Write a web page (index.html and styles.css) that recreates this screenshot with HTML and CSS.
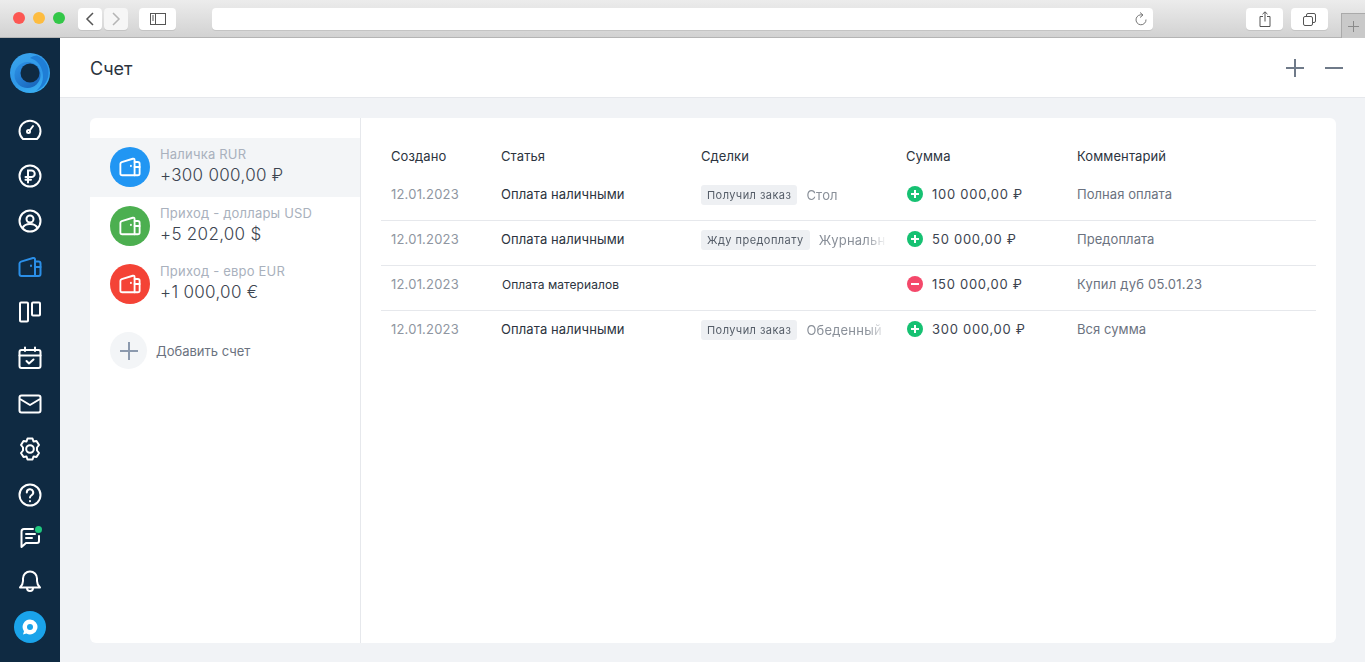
FILE: index.html
```html
<!DOCTYPE html>
<html lang="ru">
<head>
    <meta charset="UTF-8">
    <meta name="viewport" content="width=device-width, initial-scale=1.0">
    <title>Счет</title>
    <link rel="stylesheet" href="styles.css">
</head>
<body>

    <svg class="defs" width="0" height="0">
        <symbol id="wallet" viewBox="0 0 24 24" fill="none" stroke="currentColor" stroke-width="2" stroke-linejoin="round" stroke-linecap="round">
            <path d="M1.500 8.500C1.500 7.500 2 7 3 6.600L15 3C16 2.700 17 3.200 17 4.500V21H3.500A2 2 0 0 1 1.500 19Z"/>
            <path d="M17 6.500h3.500A2 2 0 0 1 22.500 8.500V19a2 2 0 0 1-2 2H17"/>
            <path d="M17 12h5.500"/>
            <path d="M13 10.500v.5"/>
        </symbol>
    </svg>

    <!-- Browser toolbar -->
    <div class="browser">
        <div class="lights">
            <span class="light light-red"></span>
            <span class="light light-yellow"></span>
            <span class="light light-green"></span>
        </div>
        <div class="nav-btns">
            <span class="btn btn-nav">
                <svg width="10" height="16" viewBox="0 0 10 16" fill="none" stroke="#555" stroke-width="1.500"><path d="M8 2 2 8l6 6"/></svg>
            </span>
            <span class="btn btn-nav">
                <svg width="10" height="16" viewBox="0 0 10 16" fill="none" stroke="#b5b5b5" stroke-width="1.500"><path d="M2 2l6 6-6 6"/></svg>
            </span>
        </div>
        <span class="btn btn-side">
            <svg width="16" height="12" viewBox="0 0 16 12" fill="none" stroke="#555"><rect x=".5" y=".5" width="15" height="11"/><path d="M5.500 0v12M2 3h2M2 5h2M2 7h2"/></svg>
        </span>
        <div class="address">
            <svg width="14" height="15" viewBox="0 0 14 15" fill="none" stroke="#777"><path d="M8.500 3A5 5 0 1 0 12 7.500"/><path d="M6 .5 9 3 6 5.500" /></svg>
        </div>
        <span class="btn btn-tool">
            <svg width="12" height="16" viewBox="0 0 12 16" fill="none" stroke="#555"><path d="M4 5.500H1v10h10v-10H8M6 10.500V1M3.500 3.200 6 .8l2.500 2.400"/></svg>
        </span>
        <span class="btn btn-tool">
            <svg width="13" height="13" viewBox="0 0 13 13" fill="none" stroke="#555"><rect x=".5" y="3.500" width="9" height="9" rx="1.500"/><path d="M3.500 3V2A1.500 1.500 0 0 1 5 .5h6A1.500 1.500 0 0 1 12.500 2v6A1.500 1.500 0 0 1 11 9.500h-1"/></svg>
        </span>
        <span class="new-tab">
            <svg width="11" height="11" viewBox="0 0 11 11" stroke="#8a8a8a"><path d="M5.500 0v11M0 5.500h11"/></svg>
        </span>
    </div>

    <div class="app">
        <!-- Sidebar -->
        <nav class="sidebar">
            <svg class="logo" width="40" height="40" viewBox="0 0 40 40">
                <defs>
                    <linearGradient id="logoGrad" x1="0.100" y1="0" x2="0.600" y2="1">
                        <stop offset="0" stop-color="#3aa4ec"/>
                        <stop offset="0.600" stop-color="#2f98e8"/>
                        <stop offset="1" stop-color="#38aef2"/>
                    </linearGradient>
                    <linearGradient id="logoInner" x1="0.100" y1="0.100" x2="0.800" y2="0.900">
                        <stop offset="0" stop-color="#2b8fe4"/>
                        <stop offset="1" stop-color="#1a68bd"/>
                    </linearGradient>
                </defs>
                <circle cx="20" cy="20" r="20" fill="url(#logoGrad)"/>
                <path d="M27 2.500C35 6 39 13 38.500 21 38 29 33 35 26 38 32 33 34 26 32.500 19 31 12 27 7 20 5 22 3.500 24.500 2.500 27 2.500Z" fill="#1f7ed6"/>
                <circle cx="17.500" cy="22" r="13" fill="url(#logoInner)"/>
                <circle cx="20" cy="20" r="9.500" fill="#0f2a42"/>
            </svg>
            <a class="nav-icon">
                <svg width="24" height="24" viewBox="0 0 24 24" fill="none" stroke="currentColor" stroke-width="2" stroke-linecap="round" stroke-linejoin="round"><path d="M5 21.500A10.500 10.500 0 1 1 19 21.500Z" transform="translate(0 -.5)"/><circle cx="10.500" cy="13.500" r="1.500"/><path d="M12 12l3-4"/></svg>
            </a>
            <a class="nav-icon">
                <svg width="24" height="24" viewBox="0 0 24 24" fill="none" stroke="currentColor" stroke-width="2" stroke-linecap="round"><circle cx="12" cy="12" r="10.500"/><path d="M10 18.500V6.500h3.500a3.200 3.200 0 0 1 0 6.500H7.500M7.500 15.800H13"/></svg>
            </a>
            <a class="nav-icon">
                <svg width="24" height="24" viewBox="0 0 24 24" fill="none" stroke="currentColor" stroke-width="2"><circle cx="12" cy="12" r="10.500"/><circle cx="12" cy="10" r="3.500"/><path d="M4.500 19c1.500-3 4-4 7.500-4s6 1 7.500 4"/></svg>
            </a>
            <a class="nav-icon nav-active">
                <svg width="24" height="24"><use href="#wallet"/></svg>
            </a>
            <a class="nav-icon">
                <svg width="24" height="24" viewBox="0 0 24 24" fill="none" stroke="currentColor" stroke-width="2" stroke-linejoin="round"><rect x="2" y="2.500" width="8" height="19" rx="1"/><rect x="14" y="2.500" width="8" height="13" rx="1"/></svg>
            </a>
            <a class="nav-icon">
                <svg width="24" height="24" viewBox="0 0 24 24" fill="none" stroke="currentColor" stroke-width="2" stroke-linecap="round" stroke-linejoin="round"><rect x="1.500" y="4" width="21" height="18" rx="2"/><path d="M1.500 9.500h21M7 1.500V5M17 1.500V5M8.500 15l2.500 2.500 4.500-4"/></svg>
            </a>
            <a class="nav-icon">
                <svg width="24" height="24" viewBox="0 0 24 24" fill="none" stroke="currentColor" stroke-width="2" stroke-linejoin="round"><rect x="1.500" y="3.500" width="21" height="17" rx="2"/><path d="M2 7l10 6 10-6"/></svg>
            </a>
            <a class="nav-icon">
                <svg width="24" height="24" viewBox="0 0 24 24" fill="none" stroke="currentColor" stroke-width="2" stroke-linejoin="round"><path d="M9.500 1.500h5l1 3 3-.5 2.500 4-2 2.500v3l2 2.500-2.500 4-3-.5-1 3h-5l-1-3-3 .5-2.500-4 2-2.500v-3l-2-2.500 2.500-4 3 .5Z"/><circle cx="12" cy="12" r="3.800"/></svg>
            </a>
            <a class="nav-icon nav-help">
                <svg width="24" height="24" viewBox="0 0 24 24" fill="none" stroke="currentColor" stroke-width="2" stroke-linecap="round"><circle cx="12" cy="12" r="10.500"/><path d="M8.800 9.500A3.200 3.200 0 1 1 13.500 12.300C12.500 13 12 13.500 12 14.500M12 18v.2"/></svg>
            </a>
            <a class="nav-icon nav-chat">
                <svg width="24" height="24" viewBox="0 0 24 24" fill="none" stroke="currentColor" stroke-width="2" stroke-linecap="round" stroke-linejoin="round"><path d="M15 4H6A2.500 2.500 0 0 0 3.500 6.500V22L8 18h11a2 2 0 0 0 2-2v-5"/><path d="M8 9h9M8 13h6"/></svg>
                <span class="chat-dot"></span>
            </a>
            <a class="nav-icon">
                <svg width="24" height="24" viewBox="0 0 24 24" fill="none" stroke="currentColor" stroke-width="2" stroke-linejoin="round" stroke-linecap="round"><path d="M2 18.500c2-2 3-3 3-6.500V9.500a7 7 0 0 1 14 0V12c0 3.500 1 4.500 3 6.500Z"/><path d="M9 19a3 3 0 0 0 6 0"/></svg>
            </a>
            <span class="support">
                <svg width="18" height="18" viewBox="0 0 18 18"><path d="M9 1.500a7.500 7.500 0 1 1-3.600 14.100L2 16.500l1-3.200A7.500 7.500 0 0 1 9 1.500Z" fill="#fff"/><circle cx="9" cy="9" r="3" fill="#1aa3ea"/></svg>
            </span>
        </nav>

        <div class="page">
            <header class="page-head">
                <h1>Счет</h1>
                <div class="head-actions">
                    <svg width="20" height="20" viewBox="0 0 20 20" stroke="#6f7a89" stroke-width="2"><path d="M10 1v18M1 10h18"/></svg>
                    <svg width="20" height="20" viewBox="0 0 20 20" stroke="#6f7a89" stroke-width="2"><path d="M1 10h18"/></svg>
                </div>
            </header>

            <main class="content">
                <section class="card">
                    <!-- Accounts -->
                    <aside class="accounts">
                        <div class="account account-active">
                            <span class="account-icon bg-blue"><svg width="22" height="22"><use href="#wallet"/></svg></span>
                            <div>
                                <div class="account-name">Наличка RUR</div>
                                <div class="account-sum">+300 000,00 ₽</div>
                            </div>
                        </div>
                        <div class="account">
                            <span class="account-icon bg-green"><svg width="22" height="22"><use href="#wallet"/></svg></span>
                            <div>
                                <div class="account-name">Приход - доллары USD</div>
                                <div class="account-sum">+5 202,00 $</div>
                            </div>
                        </div>
                        <div class="account">
                            <span class="account-icon bg-red"><svg width="22" height="22"><use href="#wallet"/></svg></span>
                            <div>
                                <div class="account-name">Приход - евро EUR</div>
                                <div class="account-sum">+1 000,00 €</div>
                            </div>
                        </div>
                        <div class="account-add">
                            <span class="add-icon">
                                <svg width="18" height="18" viewBox="0 0 18 18" stroke="#8c9aae" stroke-width="2"><path d="M9 0v18M0 9h18"/></svg>
                            </span>
                            Добавить счет
                        </div>
                    </aside>

                    <!-- Operations -->
                    <div class="operations">
                        <div class="row row-head">
                            <div>Создано</div>
                            <div>Статья</div>
                            <div>Сделки</div>
                            <div>Сумма</div>
                            <div>Комментарий</div>
                        </div>
                        <div class="row">
                            <div class="cell-date">12.01.2023</div>
                            <div class="cell-item">Оплата наличными</div>
                            <div class="cell-deal"><span class="tag">Получил заказ</span><span class="deal-name">Стол</span></div>
                            <div class="cell-sum"><span class="sign sign-plus"></span>100 000,00 ₽</div>
                            <div class="cell-note">Полная оплата</div>
                        </div>
                        <div class="row">
                            <div class="cell-date">12.01.2023</div>
                            <div class="cell-item">Оплата наличными</div>
                            <div class="cell-deal"><span class="tag">Жду предоплату</span><span class="deal-name">Журнальн</span></div>
                            <div class="cell-sum"><span class="sign sign-plus"></span>50 000,00 ₽</div>
                            <div class="cell-note">Предоплата</div>
                        </div>
                        <div class="row">
                            <div class="cell-date">12.01.2023</div>
                            <div class="cell-item cell-item-small">Оплата материалов</div>
                            <div class="cell-deal"></div>
                            <div class="cell-sum"><span class="sign sign-minus"></span>150 000,00 ₽</div>
                            <div class="cell-note cell-note-wide">Купил дуб 05.01.23</div>
                        </div>
                        <div class="row row-last">
                            <div class="cell-date">12.01.2023</div>
                            <div class="cell-item">Оплата наличными</div>
                            <div class="cell-deal"><span class="tag">Получил заказ</span><span class="deal-name">Обеденный</span></div>
                            <div class="cell-sum"><span class="sign sign-plus"></span>300 000,00 ₽</div>
                            <div class="cell-note">Вся сумма</div>
                        </div>
                    </div>
                </section>
            </main>
        </div>
    </div>

</body>
</html>
```
FILE: styles.css
```css
/* General styles */
html, body {
    height: 100%;
}

body {
    font-family: Inter, "Noto Sans", sans-serif;
    font-size: 13px;
    margin: 0;
    overflow: hidden;
    display: flex;
    flex-direction: column;
    color: #2c3440;
}

.defs {
    position: absolute;
}

/* Browser toolbar */
.browser {
    height: 29px;
    flex-shrink: 0;
    display: flex;
    align-items: flex-start;
    padding: 8px 0 0 13px;
    background: linear-gradient(#ececec, #d2d2d2);
    border-bottom: 1px solid #b4b4b4;
}

.lights {
    display: flex;
    gap: 8px;
    margin-top: 4px;
    width: 65px;
}

.light {
    width: 12px;
    height: 12px;
    border-radius: 50%;
}

.light-red { background-color: #fc5753; }
.light-yellow { background-color: #fdbc40; }
.light-green { background-color: #33c748; }

.btn {
    display: flex;
    align-items: center;
    justify-content: center;
    height: 22px;
    background-color: #fff;
    border-radius: 4px;
    box-shadow: 0 1px 0 #c4c4c4;
}

.nav-btns {
    display: flex;
    gap: 2px;
    margin-right: 11px;
}

.btn-nav { width: 24px; }
.btn-nav + .btn-nav { background-color: #f6f6f6; }
.btn-side { width: 37px; }

.address {
    display: flex;
    align-items: center;
    justify-content: flex-end;
    width: 941px;
    height: 22px;
    margin: 0 93px 0 36px;
    padding-right: 5px;
    box-sizing: border-box;
    background-color: #fff;
    border-radius: 4px;
    box-shadow: 0 1px 0 #c4c4c4;
}

.btn-tool {
    width: 37px;
    margin-right: 8px;
}

.new-tab {
    display: flex;
    align-items: center;
    justify-content: center;
    flex-grow: 1;
    height: 24px;
    margin: 5px 0 0 5px;
    background-color: #c9c9c9;
    border: 1px solid #aaa;
    border-width: 1px 0 0 1px;
}

/* App layout */
.app {
    flex-grow: 1;
    display: flex;
    min-height: 0;
}

.sidebar {
    width: 60px;
    flex-shrink: 0;
    display: flex;
    flex-direction: column;
    align-items: center;
    padding-top: 15px;
    box-sizing: border-box;
    background-color: #0f2a42;
}

.logo {
    margin-bottom: 25px;
}

.nav-icon {
    display: block;
    position: relative;
    width: 24px;
    height: 24px;
    margin-bottom: 21.600px;
    color: #fff;
}

.nav-active {
    color: #2b8fe8;
}

.nav-help {
    margin-bottom: 18px;
}

.nav-chat {
    margin-bottom: 20px;
}

.chat-dot {
    position: absolute;
    top: 1px;
    right: 0;
    width: 7px;
    height: 7px;
    border-radius: 50%;
    background-color: #1fc77e;
}

.support {
    display: flex;
    align-items: center;
    justify-content: center;
    width: 32px;
    height: 32px;
    margin-top: -3px;
    border-radius: 50%;
    background-color: #1aa3ea;
}

.page {
    flex-grow: 1;
    display: flex;
    flex-direction: column;
    min-width: 0;
}

.page-head {
    height: 59px;
    flex-shrink: 0;
    display: flex;
    align-items: center;
    justify-content: space-between;
    padding: 0 21px 0 30px;
    background-color: #fff;
    border-bottom: 1px solid #e6e8ec;
}

.page-head h1 {
    margin: 2px 0 0;
    font-size: 18px;
    font-weight: 400;
    color: #2c3440;
}

.head-actions {
    display: flex;
    gap: 19px;
}

.content {
    flex-grow: 1;
    padding: 20px 29px 19px 30px;
    background-color: #f1f3f6;
    min-height: 0;
    display: flex;
}

.card {
    flex-grow: 1;
    display: flex;
    background-color: #fff;
    border-radius: 6px;
}

/* Accounts */
.accounts {
    width: 271px;
    flex-shrink: 0;
    box-sizing: border-box;
    padding-top: 20px;
    border-right: 1px solid #e6e8ec;
}

.account {
    display: flex;
    align-items: center;
    gap: 10px;
    height: 58px;
    padding: 0 20px;
}

.account-active {
    padding-bottom: 1px;
    background-color: #f3f5f7;
}

.account-icon {
    display: flex;
    align-items: center;
    justify-content: center;
    width: 40px;
    height: 40px;
    flex-shrink: 0;
    border-radius: 50%;
    color: #fff;
}

.bg-blue { background-color: #2196f3; }
.bg-green { background-color: #4caf50; }
.bg-red { background-color: #f44336; }

.account-name {
    font-size: 13px;
    line-height: 16px;
    color: #a9b1bd;
    letter-spacing: 0.200px;
}

.account-sum {
    font-size: 17px;
    font-weight: 300;
    line-height: 25px;
    margin-top: 1px;
    letter-spacing: 0.300px;
    color: #3c4450;
}

.account-add {
    display: flex;
    align-items: center;
    gap: 9px;
    margin: 19px 20px 0;
    font-size: 13px;
    color: #6b7280;
}

.add-icon {
    display: flex;
    align-items: center;
    justify-content: center;
    width: 37px;
    height: 37px;
    border-radius: 50%;
    background-color: #f3f5f7;
}

/* Operations */
.operations {
    flex-grow: 1;
    min-width: 0;
    padding: 18px 20px 0;
}

.row {
    display: grid;
    grid-template-columns: 110px 200px 205px 171px 1fr;
    align-items: center;
    height: 45px;
    box-sizing: border-box;
    padding: 0 0 8px 10px;
    border-bottom: 1px solid #e6e8ec;
    letter-spacing: 0.100px;
}

.row-last {
    border-bottom-color: transparent;
}

.row-head {
    height: 40px;
    padding-bottom: 0;
    border-bottom: none;
    color: #2c3440;
}

.cell-date {
    letter-spacing: 0.200px;
    color: #8f96a1;
}

.cell-item {
    color: #2c3440;
}

.cell-item-small {
    padding-left: 1px;
    font-size: 12px;
    letter-spacing: 0.060px;
}

.cell-deal {
    display: flex;
    align-items: center;
    gap: 9px;
    width: 186px;
    overflow: hidden;
    white-space: nowrap;
    padding-top: 2px;
    letter-spacing: 0.200px;
    color: #8a9099;
    -webkit-mask-image: linear-gradient(to right, #000 165px, transparent 186px);
    mask-image: linear-gradient(to right, #000 165px, transparent 186px);
}

.tag {
    flex-shrink: 0;
    padding: 0 6px;
    line-height: 20px;
    font-size: 11px;
    letter-spacing: 0.450px;
    border-radius: 3px;
    background-color: #eef0f3;
    color: #555d68;
}

.cell-sum {
    display: flex;
    align-items: center;
    gap: 9px;
    color: #3c4450;
    letter-spacing: 0.730px;
}

.sign {
    position: relative;
    width: 16px;
    height: 16px;
    margin-left: 1px;
    border-radius: 50%;
}

.sign::before,
.sign-plus::after {
    content: "";
    position: absolute;
    background-color: #fff;
}

.sign::before {
    left: 4px;
    top: 7px;
    width: 8px;
    height: 2px;
}

.sign-plus::after {
    left: 7px;
    top: 4px;
    width: 2px;
    height: 8px;
}

.sign-plus { background-color: #16c172; }
.sign-minus { background-color: #f4486a; }

.cell-note {
    letter-spacing: 0.050px;
    color: #6b7280;
}

.cell-note-wide {
    letter-spacing: 0.220px;
}
```
